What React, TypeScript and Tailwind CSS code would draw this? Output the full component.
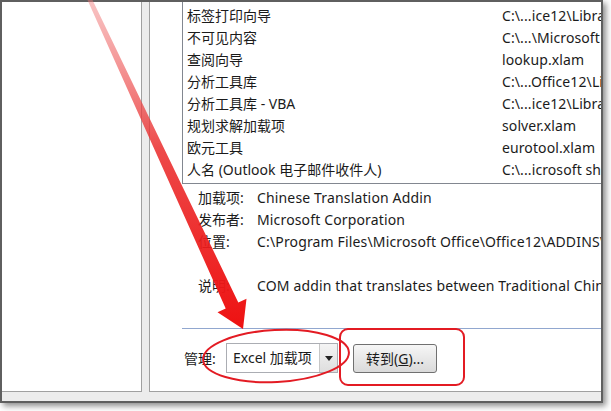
import React from 'react';

const font = { fontFamily: '"Noto Sans", "Noto Sans CJK SC", sans-serif' };

const addins = [
  { name: '标签打印向导', path: 'C:\\...ice12\\Library\\' },
  { name: '不可见内容', path: 'C:\\...\\Microsoft Office\\' },
  { name: '查阅向导', path: 'lookup.xlam' },
  { name: '分析工具库', path: 'C:\\...Office12\\Library\\' },
  { name: '分析工具库 - VBA', path: 'C:\\...ice12\\Library\\' },
  { name: '规划求解加载项', path: 'solver.xlam' },
  { name: '欧元工具', path: 'eurotool.xlam' },
  { name: '人名 (Outlook 电子邮件收件人)', path: 'C:\\...icrosoft shared\\' },
];

const details = [
  { label: '加载项:', value: 'Chinese Translation Addin' },
  { label: '发布者:', value: 'Microsoft Corporation' },
  { label: '位置:', value: 'C:\\Program Files\\Microsoft Office\\Office12\\ADDINS\\TCSCCONV.DLL' },
  { label: '', value: '' },
  { label: '说明:', value: 'COM addin that translates between Traditional Chinese and Simplified Chinese' },
];

function Annotations() {
  return (
    <svg className="absolute left-0 top-0 pointer-events-none" width="611" height="411" viewBox="0 0 611 411">
      <defs>
        <linearGradient id="shaft" x1="0" y1="0" x2="0" y2="1">
          <stop offset="0" stopColor="#f07a7a" stopOpacity="0.45" />
          <stop offset="0.45" stopColor="#ea2a2a" stopOpacity="0.85" />
          <stop offset="1" stopColor="#ee1111" stopOpacity="1" />
        </linearGradient>
      </defs>
      <polygon
        points="87.5,0 92.5,0 238.3,302.4 246.5,298.7 243,329 217.5,312.2 225.7,308.4"
        fill="url(#shaft)"
      />
      <ellipse cx="276" cy="356" rx="73" ry="26" transform="rotate(-3 276 356)" fill="none" stroke="#e31b23" strokeWidth="2" />
      <rect x="340" y="329" width="124" height="56" rx="8" fill="none" stroke="#e31b23" strokeWidth="2" />
    </svg>
  );
}

export default function App() {
  return (
    <div className="relative w-[611px] h-[411px] bg-white overflow-hidden text-[14px] text-[#1b1b1b]" style={font}>
      <div className="w-[603px] h-[403px] border-2 border-[#5f5f5f] bg-[#ececec] shadow-[3px_3px_6px_rgba(0,0,0,0.45)] flex flex-col">
        <div className="flex h-[390px]">
          <div className="w-[140px] bg-white border-r border-b border-[#a0a0a0]" />
          <div className="w-[7px]" />
          <div className="flex-1 bg-white border-l border-b border-[#a0a0a0] overflow-hidden flex flex-col">
            <div className="ml-[32px] -mr-[20px] border-l border-b border-[#828790] pt-[3px] pb-[2px]">
              {addins.map(a => (
                <div key={a.name} className="flex h-[22px] leading-[22px] whitespace-nowrap">
                  <div className="w-[319px] pl-[4px] shrink-0">{a.name}</div>
                  <div className="tracking-[0.1px]">{a.path}</div>
                </div>
              ))}
            </div>

            <div className="mt-[3px] pl-[48px]">
              {details.map((d, i) => (
                <div key={i} className="flex h-[22px] leading-[22px] whitespace-nowrap">
                  <div className="w-[59px] shrink-0">{d.label}</div>
                  <div className="tracking-[0.15px]">{d.value}</div>
                </div>
              ))}
            </div>

            <div className="mt-[31px] ml-[32px] h-px bg-[#91a7cf]" />

            <div className="mt-[14px] ml-[34px] flex items-center">
              <span className="w-[42px]">管理:</span>
              <div className="w-[112px] h-[30px] border border-[#abadb3] bg-white flex">
                <div className="flex-1 pl-[6px] leading-[28px] whitespace-nowrap">Excel 加载项</div>
                <div className="w-[18px] border-l border-[#c6c6c6] bg-gradient-to-b from-[#f4f4f4] to-[#dedede] flex items-center justify-center">
                  <svg width="8" height="5" viewBox="0 0 8 5">
                    <polygon points="0,0 8,0 4,5" fill="#222" />
                  </svg>
                </div>
              </div>
              <button className="ml-[15px] w-[84px] h-[29px] rounded-[3px] border border-[#707070] bg-gradient-to-b from-[#f6f6f6] to-[#dadada] leading-[27px] text-[#1b1b1b]">
                转到(<span className="underline">G</span>)...
              </button>
            </div>
          </div>
        </div>
      </div>
      <Annotations />
    </div>
  );
}
